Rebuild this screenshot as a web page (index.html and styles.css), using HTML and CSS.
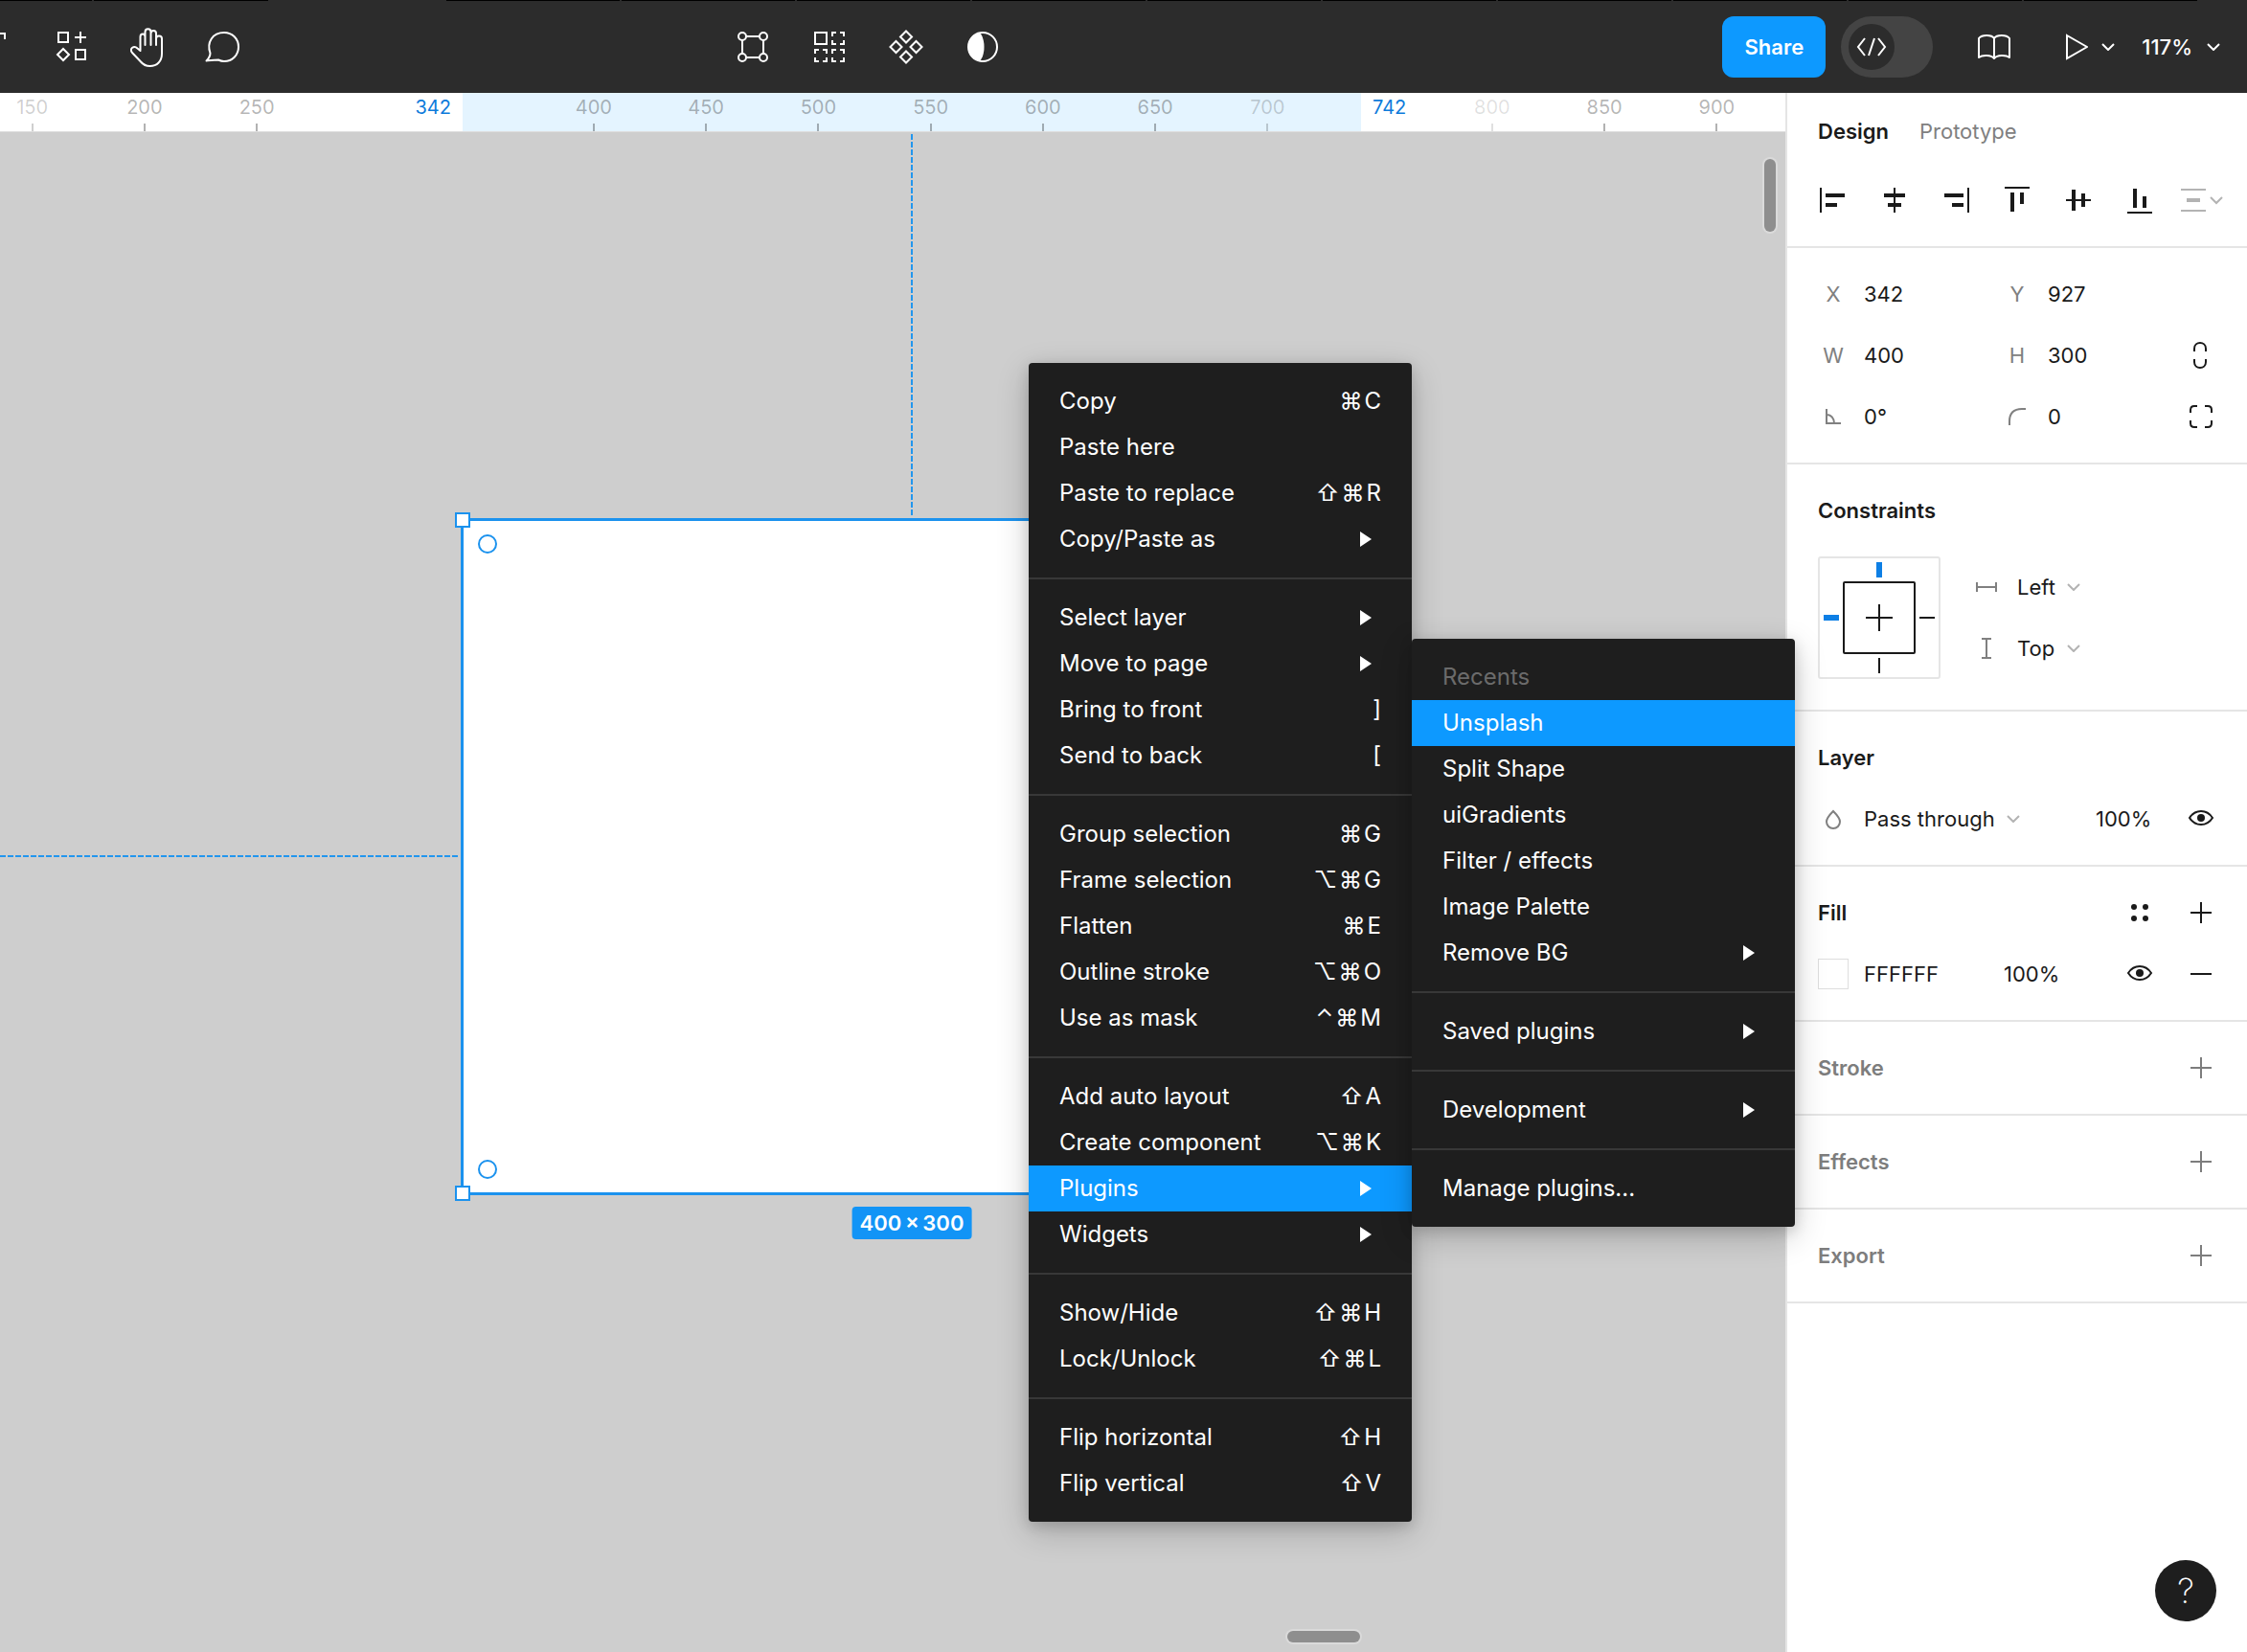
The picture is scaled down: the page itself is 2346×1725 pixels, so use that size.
FILE: index.html
```html
<!DOCTYPE html>
<html lang="en">
<head>
<meta charset="utf-8">
<title>Design editor</title>
<link rel="stylesheet" href="styles.css">
</head>
<body>
<svg class="defs" aria-hidden="true">
  <symbol id="chevron" viewBox="0 0 14 8"><path d="M1 1l6 6 6-6" fill="none" stroke="currentColor" stroke-width="2"/></symbol>
  <symbol id="plus" viewBox="0 0 32 32"><path d="M16 5v22M5 16h22" fill="none" stroke="currentColor" stroke-width="2"/></symbol>
  <symbol id="eye" viewBox="0 0 32 32"><path d="M4 15c3-4.700 7.200-7 12-7s9 2.300 12 7c-3 4.700-7.200 7-12 7S7 19.700 4 15z" fill="none" stroke="currentColor" stroke-width="2"/><circle cx="16" cy="15" r="4" fill="currentColor"/></symbol>
  <symbol id="arrow" viewBox="0 0 12 16"><path d="M0 0l12 8-12 8z" fill="currentColor"/></symbol>
</svg>

<div class="tab-strip" aria-hidden="true"><span class="tab-a"></span><span class="tab-b"></span><span class="tab-active"></span><span class="tab"></span><span class="tab"></span><span class="tab"></span><span class="tab"></span><span class="tab"></span><span class="tab"></span><span class="tab"></span><span class="tab"></span><span class="tab"></span><span class="tab"></span></div>

<header class="toolbar">
  <div class="tools tools-left">
    <button class="tool" aria-label="Text"><svg width="36" height="36" viewBox="0 0 36 36"><path d="M7 10V4h22v6M18 4v28" fill="none" stroke="currentColor" stroke-width="2"/></svg></button>
    <button class="tool" aria-label="Resources"><svg width="36" height="36" viewBox="0 0 36 36"><g fill="none" stroke="currentColor" stroke-width="2"><path d="M5 3h10v10H5zM28 2v12M22 8h12M23 21h10v10H23zM10 20l6 6-6 6-6-6z"/></g></svg></button>
    <button class="tool" aria-label="Hand"><svg width="36" height="42" viewBox="0 0 36 42"><path d="M10.500 24V10.500c0-4 5-4 5 0V19V5.500c0-4.500 6-4.500 6 0V19V7c0-4 5.500-4 5.500 0v12v-6.500c0-4 6-4 6 0V28c0 8-5 13-12.500 13-4 0-7-1.500-9.500-4.500L2 27c-3.500-4.500 2-8 5.500-4.500l3 2.500" fill="none" stroke="currentColor" stroke-width="2" stroke-linejoin="round" stroke-linecap="round"/></svg></button>
    <button class="tool" aria-label="Comment"><svg width="40" height="36" viewBox="0 0 40 36"><path d="M1.500 32.500c2.500-2.500 4-5 4-8C1.500 13 8 3 20 3c8.500 0 15 6.500 15 15s-6.500 15-15 15c-2.500 0-4-.5-6-1.500-4 0-8 .5-12.500 1z" fill="none" stroke="currentColor" stroke-width="2" stroke-linejoin="round"/></svg></button>
  </div>
  <div class="tools">
    <button class="tool" aria-label="Edit object"><svg width="36" height="36" viewBox="0 0 36 36"><g fill="none" stroke="currentColor" stroke-width="2"><circle cx="7" cy="7" r="4"/><circle cx="29" cy="7" r="4"/><circle cx="7" cy="29" r="4"/><circle cx="29" cy="29" r="4"/><path d="M11 7h14M11 29h14M7 11v14M29 11v14"/></g></svg></button>
    <button class="tool" aria-label="Tidy up"><svg width="36" height="36" viewBox="0 0 36 36"><g fill="none" stroke="currentColor" stroke-width="2"><path d="M3 3h12v12H3z"/><path d="M21 7V3h4M29 3h4v4M33 11v4h-4M25 15h-4v-4"/><path d="M3 25v-4h4M11 21h4v4M15 29v4h-4M7 33H3v-4M21 25v-4h4M29 21h4v4M33 29v4h-4M25 33h-4v-4"/></g></svg></button>
    <button class="tool" aria-label="Create component"><svg width="36" height="36" viewBox="0 0 36 36"><path d="M18 1.500l6 6-6 6-6-6zM18 22.500l6 6-6 6-6-6zM7.500 12l6 6-6 6-6-6zM28.500 12l6 6-6 6-6-6z" fill="none" stroke="currentColor" stroke-width="2"/></svg></button>
    <button class="tool" aria-label="Mask"><svg width="36" height="36" viewBox="0 0 36 36"><circle cx="18" cy="18" r="15" fill="none" stroke="currentColor" stroke-width="2"/><path d="M15 3.300c6 6.500 6 22.900 0 29.400C8 31.500 3 25.500 3 18S8 4.500 15 3.300z" fill="currentColor"/></svg></button>
  </div>
  <div class="actions">
    <button class="share">Share</button>
    <label class="dev-toggle"><input type="checkbox" aria-label="Dev Mode"><span class="knob"><svg width="32" height="24" viewBox="0 0 32 24"><path d="M9 3L2 12l7 9M23 3l7 9-7 9M19 3l-6 18" fill="none" stroke="currentColor" stroke-width="2"/></svg></span></label>
    <button class="book" aria-label="Libraries"><svg width="36" height="28" viewBox="0 0 36 28"><path d="M18 5c-2.500-4-13-4-16 0v20c4-3 13-2.500 16 1 3-3.500 12-4 16-1V5c-3-4-13.500-4-16 0zv21" fill="none" stroke="currentColor" stroke-width="2" stroke-linejoin="round"/></svg></button>
    <button class="present" aria-label="Present"><svg width="24" height="28" viewBox="0 0 24 28"><path d="M2 2l21 12L2 26z" fill="none" stroke="currentColor" stroke-width="2"/></svg><svg class="chev"><use href="#chevron"/></svg></button>
    <button class="zoom">117%<svg class="chev"><use href="#chevron"/></svg></button>
  </div>
</header>

<main class="editor">
  <section class="workspace">
    <div class="ruler">
      <div class="ruler-range"><span class="range-start">342</span><span class="range-end">742</span></div>
      <ol class="marks">
        <li class="dim">150</li><li>200</li><li>250</li><li class="blank"></li><li class="blank"></li><li>400</li><li>450</li><li>500</li><li>550</li><li>600</li><li>650</li><li class="dim">700</li><li class="blank"></li><li class="faint">800</li><li>850</li><li>900</li>
      </ol>
    </div>
    <div class="canvas">
      <div class="guide guide-v"></div>
      <div class="guide guide-h"></div>
      <div class="frame">
        <i class="handle top"></i><i class="handle bottom"></i>
        <i class="radius top"></i><i class="radius bottom"></i>
      </div>
      <div class="size-badge">400&thinsp;×&thinsp;300</div>
      <div class="scroll scroll-v"></div>
      <div class="scroll scroll-h"></div>
    </div>

    <div class="menu context-menu" role="menu">
      <div class="group">
        <button role="menuitem">Copy<kbd>⌘<b>C</b></kbd></button>
        <button role="menuitem">Paste here</button>
        <button role="menuitem">Paste to replace<kbd>⇧<b>⌘</b><b>R</b></kbd></button>
        <button role="menuitem">Copy/Paste as<svg class="arrow"><use href="#arrow"/></svg></button>
      </div>
      <div class="group">
        <button role="menuitem">Select layer<svg class="arrow"><use href="#arrow"/></svg></button>
        <button role="menuitem">Move to page<svg class="arrow"><use href="#arrow"/></svg></button>
        <button role="menuitem">Bring to front<kbd>]</kbd></button>
        <button role="menuitem">Send to back<kbd>[</kbd></button>
      </div>
      <div class="group">
        <button role="menuitem">Group selection<kbd>⌘<b>G</b></kbd></button>
        <button role="menuitem">Frame selection<kbd>⌥<b>⌘</b><b>G</b></kbd></button>
        <button role="menuitem">Flatten<kbd>⌘<b>E</b></kbd></button>
        <button role="menuitem">Outline stroke<kbd>⌥<b>⌘</b><b>O</b></kbd></button>
        <button role="menuitem">Use as mask<kbd>⌃<b>⌘</b><b>M</b></kbd></button>
      </div>
      <div class="group">
        <button role="menuitem">Add auto layout<kbd>⇧<b>A</b></kbd></button>
        <button role="menuitem">Create component<kbd>⌥<b>⌘</b><b>K</b></kbd></button>
        <button role="menuitem" class="active">Plugins<svg class="arrow"><use href="#arrow"/></svg></button>
        <button role="menuitem">Widgets<svg class="arrow"><use href="#arrow"/></svg></button>
      </div>
      <div class="group">
        <button role="menuitem">Show/Hide<kbd>⇧<b>⌘</b><b>H</b></kbd></button>
        <button role="menuitem">Lock/Unlock<kbd>⇧<b>⌘</b><b>L</b></kbd></button>
      </div>
      <div class="group">
        <button role="menuitem">Flip horizontal<kbd>⇧<b>H</b></kbd></button>
        <button role="menuitem">Flip vertical<kbd>⇧<b>V</b></kbd></button>
      </div>

      <div class="menu submenu" role="menu">
        <div class="group">
          <p class="menu-title">Recents</p>
          <button role="menuitem" class="active">Unsplash</button>
          <button role="menuitem">Split Shape</button>
          <button role="menuitem">uiGradients</button>
          <button role="menuitem">Filter / effects</button>
          <button role="menuitem">Image Palette</button>
          <button role="menuitem">Remove BG<svg class="arrow"><use href="#arrow"/></svg></button>
        </div>
        <div class="group"><button role="menuitem">Saved plugins<svg class="arrow"><use href="#arrow"/></svg></button></div>
        <div class="group"><button role="menuitem">Development<svg class="arrow"><use href="#arrow"/></svg></button></div>
        <div class="group"><button role="menuitem">Manage plugins...</button></div>
      </div>
    </div>
  </section>

  <aside class="panel">
    <nav class="panel-tabs"><button class="current">Design</button><button>Prototype</button></nav>
    <div class="align-row">
      <button aria-label="Align left"><svg class="icon" viewBox="0 0 32 32"><path d="M2 3h2v26H2zM8 9h20v4H8zM8 19h12v4H8z"/></svg></button>
      <button aria-label="Align horizontal centers"><svg class="icon" viewBox="0 0 32 32"><path d="M15 3h2v26h-2zM5 9h22v4H5zM9 19h14v4H9z"/></svg></button>
      <button aria-label="Align right"><svg class="icon" viewBox="0 0 32 32"><path d="M28 3h2v26h-2zM4 9h20v4H4zM12 19h12v4H12z"/></svg></button>
      <button aria-label="Align top"><svg class="icon" viewBox="0 0 32 32"><path d="M3 2h26v2H3zM9 8h4v20H9zM19 8h4v12h-4z"/></svg></button>
      <button aria-label="Align vertical centers"><svg class="icon" viewBox="0 0 32 32"><path d="M3 15h26v2H3zM9 5h4v22H9zM19 9h4v14h-4z"/></svg></button>
      <button aria-label="Align bottom"><svg class="icon" viewBox="0 0 32 32"><path d="M3 28h26v2H3zM9 4h4v20H9zM19 12h4v12h-4z"/></svg></button>
      <button aria-label="Distribute" class="muted"><svg width="48" height="32" viewBox="0 0 48 32"><path d="M3 4h26v2H3zM9 14h14v4H9zM3 26h26v2H3z" fill="currentColor"/><path d="M34 13l6 6 6-6" fill="none" stroke="currentColor" stroke-width="2"/></svg></button>
    </div>

    <section class="block transform-block">
      <label class="field"><span class="glyph">X</span><input value="342"></label>
      <label class="field"><span class="glyph">Y</span><input value="927"></label>
      <span></span>
      <label class="field"><span class="glyph">W</span><input value="400"></label>
      <label class="field"><span class="glyph">H</span><input value="300"></label>
      <button class="icon-button" aria-label="Constrain proportions"><svg class="icon line" viewBox="0 0 32 32"><path d="M9 12V9c0-8 12-8 12 0v3M9 20v3c0 8 12 8 12 0v-3"/></svg></button>
      <label class="field"><span class="glyph"><svg class="icon line" viewBox="0 0 32 32" role="img" aria-label="Rotation"><path d="M9 8v15h15M9 14c5 0 8 4 8 9"/></svg></span><input value="0°"></label>
      <label class="field"><span class="glyph"><svg class="icon line" viewBox="0 0 32 32" role="img" aria-label="Corner radius"><path d="M8 25v-4C8 12 12 8 21 8h4"/></svg></span><input value="0"></label>
      <button class="icon-button" aria-label="Independent corners"><svg class="icon line" viewBox="0 0 32 32"><path d="M5 12V9c0-3 1-4 4-4h3M20 5h3c3 0 4 1 4 4v3M27 20v3c0 3-1 4-4 4h-3M12 27H9c-3 0-4-1-4-4v-3"/></svg></button>
    </section>

    <section class="block">
      <div class="row"><h2>Constraints</h2></div>
      <div class="constraints">
        <svg width="128" height="128" viewBox="0 0 128 128" role="img" aria-label="Pinned left and top"><rect x="1" y="1" width="126" height="126" rx="2" fill="none" stroke="#e5e5e5" stroke-width="2"/><rect x="27" y="27" width="74" height="74" rx="1" fill="none" stroke="#1a1a1a" stroke-width="2"/><path d="M64 50v28M50 64h28M106 64h16M64 106v16" stroke="#1a1a1a" stroke-width="2"/><path d="M61 6h6v16h-6zM6 61h16v6H6z" fill="#0d7fe5"/></svg>
        <div class="constraint-fields">
          <label class="field"><span class="glyph"><svg class="icon line" viewBox="0 0 32 32" role="img" aria-label="Horizontal"><path d="M6 16h20M6 11v10M26 11v10"/></svg></span><select><option>Left</option></select><svg class="chev"><use href="#chevron"/></svg></label>
          <label class="field"><span class="glyph"><svg class="icon line" viewBox="0 0 32 32" role="img" aria-label="Vertical"><path d="M16 6v20M11 6h10M11 26h10"/></svg></span><select><option>Top</option></select><svg class="chev"><use href="#chevron"/></svg></label>
        </div>
      </div>
    </section>

    <section class="block">
      <div class="row"><h2>Layer</h2></div>
      <div class="row">
        <label class="field blend"><span class="glyph"><svg class="icon line" viewBox="0 0 32 32" role="img" aria-label="Blend mode"><path d="M16 8c4 4 7 7 7 11a7 7 0 0 1-14 0c0-4 3-7 7-11z"/></svg></span><select><option>Pass through</option></select><svg class="chev"><use href="#chevron"/></svg></label>
        <input class="percent" value="100%" aria-label="Layer opacity">
        <button class="icon-button" aria-label="Toggle layer"><svg class="icon"><use href="#eye"/></svg></button>
      </div>
    </section>

    <section class="block">
      <div class="row"><h2>Fill</h2>
        <button class="icon-button" aria-label="Styles"><svg class="icon" viewBox="0 0 32 32"><circle cx="10" cy="10" r="3"/><circle cx="22" cy="10" r="3"/><circle cx="10" cy="22" r="3"/><circle cx="22" cy="22" r="3"/></svg></button>
        <button class="icon-button" aria-label="Add fill"><svg class="icon"><use href="#plus"/></svg></button>
      </div>
      <div class="row">
        <label class="field fill-color"><span class="swatch"></span><input value="FFFFFF" aria-label="Fill colour"></label>
        <input class="percent fill-percent" value="100%" aria-label="Fill opacity">
        <button class="icon-button" aria-label="Toggle fill"><svg class="icon"><use href="#eye"/></svg></button>
        <button class="icon-button" aria-label="Remove fill"><svg class="icon line" viewBox="0 0 32 32"><path d="M5 16h22"/></svg></button>
      </div>
    </section>

    <section class="block empty"><div class="row"><h2>Stroke</h2><button class="icon-button" aria-label="Add stroke"><svg class="icon"><use href="#plus"/></svg></button></div></section>
    <section class="block empty"><div class="row"><h2>Effects</h2><button class="icon-button" aria-label="Add effect"><svg class="icon"><use href="#plus"/></svg></button></div></section>
    <section class="block empty"><div class="row"><h2>Export</h2><button class="icon-button" aria-label="Add export"><svg class="icon"><use href="#plus"/></svg></button></div></section>
    <button class="help" aria-label="Help">?</button>
  </aside>
</main>
</body>
</html>
```
FILE: styles.css
```css
* { box-sizing: border-box; }

body {
  margin: 0;
  height: 100vh;
  display: flex;
  flex-direction: column;
  overflow: hidden;
  font: 400 22px/32px Inter, "Liberation Sans", sans-serif;
  font-optical-sizing: none;
  color: #1a1a1a;
  background: #fff;
}

button, input, select {
  font: inherit;
  color: inherit;
  background: none;
  border: 0;
  padding: 0;
  margin: 0;
  border-radius: 0;
}

button { display: flex; align-items: center; }
svg { display: block; flex: none; }
.defs { position: absolute; width: 0; height: 0; }
.chev { width: 14px; height: 8px; }
.icon { width: 32px; height: 32px; fill: currentColor; }
.icon.line { fill: none; stroke: currentColor; stroke-width: 2; }

/* Tab strip */
.tab-strip { display: flex; flex: none; gap: 2px; height: 1px; background: #2c2c2c; overflow: hidden; }
.tab-strip span { flex: none; background: #000; }
.tab-strip .tab-a { width: 96px; }
.tab-strip .tab-b { width: 182px; }
.tab-strip .tab-active { width: 182px; background: #2c2c2c; }
.tab-strip .tab { width: 181px; }

/* Toolbar */
.toolbar {
  flex: none;
  height: 96px;
  display: grid;
  grid-template-columns: 746px auto 1fr;
  align-items: center;
  background: #2c2c2c;
  color: #fff;
}
.tools { display: flex; }
.tools-left { margin-left: -46px; }
.tool { width: 80px; height: 80px; justify-content: center; }
.actions { display: flex; align-items: center; justify-content: flex-end; padding-right: 28px; }
.share {
  width: 108px;
  height: 64px;
  justify-content: center;
  border-radius: 12px;
  background: #0d99ff;
  font-weight: 600;
}
.dev-toggle {
  display: flex;
  align-items: center;
  width: 96px;
  height: 64px;
  margin-left: 16px;
  padding: 8px;
  border-radius: 32px;
  background: #444;
}
.dev-toggle input { position: absolute; opacity: 0; }
.knob {
  display: flex;
  align-items: center;
  justify-content: center;
  width: 48px;
  height: 48px;
  border-radius: 24px;
  background: #2c2c2c;
}
.book { margin: 0 56px 0 46px; }
.present { gap: 14px; margin-right: 28px; }
.zoom { gap: 15px; font-weight: 500; }

/* Editor */
.editor { flex: 1; display: flex; min-height: 0; }
.workspace { position: relative; z-index: 1; flex: 1; min-width: 0; display: flex; flex-direction: column; }

.ruler {
  position: relative;
  flex: none;
  height: 41px;
  border-bottom: 1px solid #dedede;
  font-size: 20px;
  line-height: 30px;
  color: #b3b3b3;
}
.ruler-range { position: absolute; left: 483px; top: 0; width: 938px; height: 40px; background: #e4f4ff; color: #0d7bdb; }
.range-start, .range-end { position: absolute; top: 0; }
.range-start { right: 100%; padding-right: 12px; }
.range-end { left: 100%; padding-left: 12px; }
.marks { position: relative; display: flex; margin: 0 13px 0 -25px; padding: 0; list-style: none; }
.marks li { flex: 1; height: 40px; text-align: center; color: rgba(0, 0, 0, .3); }
.marks li::after { content: ""; display: block; width: 2px; height: 8px; margin: 2px auto 0; background: currentColor; }
.marks .dim { color: rgba(0, 0, 0, .19); }
.marks .faint { color: rgba(0, 0, 0, .12); }
.marks .blank::after { display: none; }

.canvas { position: relative; flex: 1; overflow: hidden; background: #cecece; }
.guide { position: absolute; }
.guide-v { left: 951px; top: 2px; width: 2px; height: 398px; background: repeating-linear-gradient(#2296ee 0 6px, transparent 6px 8px); }
.guide-h { left: 0; top: 755px; width: 480px; height: 2px; background: repeating-linear-gradient(90deg, #2296ee 0 6px, transparent 6px 8px); }
.frame { position: absolute; left: 481px; top: 403px; width: 941px; height: 707px; border: 3px solid #1b92ee; background: #fff; }
.handle, .radius { position: absolute; background: #fff; border: 2px solid #1b92ee; }
.handle { left: -9px; width: 16px; height: 16px; }
.handle.top { top: -9px; }
.handle.bottom { bottom: -9px; }
.radius { left: 15px; width: 20px; height: 20px; border-radius: 10px; }
.radius.top { top: 14px; }
.radius.bottom { bottom: 14px; }
.size-badge {
  position: absolute;
  left: 952px;
  top: 1122px;
  padding: 1px 8px;
  transform: translateX(-50%);
  border-radius: 4px;
  background: #1294f6;
  color: #fff;
  font-weight: 600;
  white-space: nowrap;
}
.scroll { position: absolute; border-radius: 8px; background: #8e8e8e; box-shadow: 0 0 0 2px #dadada; }
.scroll-v { right: 10px; top: 28px; width: 12px; height: 76px; }
.scroll-h { left: 1344px; bottom: 10px; width: 76px; height: 12px; }

/* Menus */
.menu {
  position: absolute;
  width: 400px;
  border-radius: 4px;
  background: #1e1e1e;
  color: #fff;
  font-size: 24px;
  box-shadow: 0 4px 14px rgba(0, 0, 0, .15), 0 10px 34px rgba(0, 0, 0, .2);
}
.context-menu { left: 1074px; top: 282px; }
.submenu { left: 100%; top: 288px; }
.group { padding: 16px 0; }
.group + .group { border-top: 2px solid #383838; }
.group button, .menu-title {
  display: flex;
  align-items: center;
  justify-content: space-between;
  width: 100%;
  height: 48px;
  margin: 0;
  padding: 0 32px;
  text-align: left;
}
.menu-title { color: #6b6b6b; }
.group .active { background: #0d99ff; }
.group .arrow { width: 12px; height: 16px; margin-right: 10px; }
kbd { display: flex; gap: 2px; font: inherit; }
kbd b { font-weight: inherit; }

/* Properties panel */
.panel { flex: none; width: 482px; border-left: 2px solid #e5e5e5; background: #fff; position: relative; }
.panel-tabs { display: flex; gap: 32px; height: 80px; padding: 0 32px; color: #808080; }
.panel-tabs .current { font-weight: 600; color: #1a1a1a; }
.align-row { display: flex; padding: 0 16px 16px; border-bottom: 2px solid #e5e5e5; }
.align-row button { width: 64px; height: 64px; justify-content: center; }
.muted { color: #b3b3b3; }

.block { padding: 16px 16px 16px 32px; border-bottom: 2px solid #e5e5e5; }
.transform-block { display: grid; grid-template-columns: 192px 1fr 64px; }
.row { display: flex; align-items: center; height: 64px; }
h2 { flex: 1; margin: 0; font-size: 22px; line-height: 32px; font-weight: 600; }
.empty { color: #7d7d7d; }
.field { display: flex; align-items: center; height: 64px; }
.field input { width: 112px; }
.glyph { display: flex; justify-content: center; flex: none; width: 32px; margin-right: 16px; color: #808080; }
.field select { appearance: none; }
.field .chev { margin-left: 12px; color: #b3b3b3; }
.icon-button { flex: none; width: 64px; height: 64px; justify-content: center; }
.constraints { display: flex; gap: 32px; padding: 16px 0; }
.blend { width: 290px; }
.percent { width: 78px; }
.swatch { width: 32px; height: 32px; margin-right: 16px; border: 1px solid #dedede; }
.fill-color { width: 194px; }
.fill-percent { width: 110px; }

.help {
  position: absolute;
  right: 32px;
  bottom: 32px;
  width: 64px;
  height: 64px;
  justify-content: center;
  border-radius: 32px;
  background: #1e1e1e;
  color: #fff;
  font-size: 36px;
  font-weight: 200;
}
```
